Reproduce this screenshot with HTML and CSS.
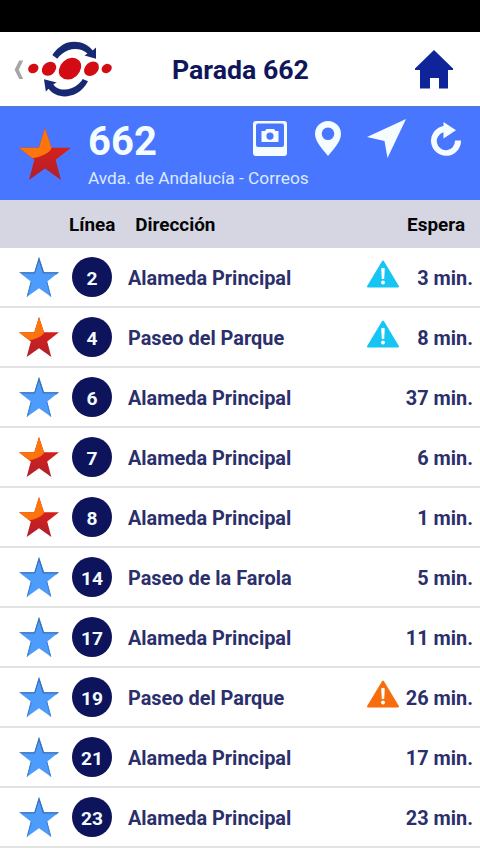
FILE: index.html
```html
<!DOCTYPE html>
<html lang="es">
<head>
<meta charset="utf-8">
<title>Parada 662</title>
<link rel="stylesheet" href="styles.css">
</head>
<body>
<svg class="defs" width="0" height="0" aria-hidden="true">
  <defs>
    <linearGradient id="gRed" x1="0" y1="0" x2="0" y2="1"><stop offset=".4" stop-color="#d5201c"/><stop offset="1" stop-color="#ae202c"/></linearGradient>
    <clipPath id="starClip"><path d="M20 0 25 15.200H40L28.200 24.500 32.300 40 20 31.200 7.700 40 11.800 24.500 0 15.200H15.300z"/></clipPath>
  </defs>
  <symbol id="star-blue" viewBox="0 0 40 40">
    <path fill="#4d9bfa" d="M20 0 25 15.200H40L28.200 24.500 32.300 40 20 31.200 7.700 40 11.800 24.500 0 15.200H15.300z"/>
    <path fill="#3c71b5" d="M20 0 25 15.200H40L36.500 17.900 37 16.600H24L20 4 16 16.600H3.500L0 15.200H15.300z"/>
    <path fill="#3f80d0" d="M7.700 40 11.800 24.500 12.800 25 9 39zM32.300 40 28.200 24.500 27.300 25 31 39z"/>
  </symbol>
  <symbol id="star-red" viewBox="0 0 40 40">
    <g clip-path="url(#starClip)"><path fill="url(#gRed)" d="M0 0H40V40H0z"/><path fill="#fb740c" d="M0 0H26V13Q25 17 22 19 16 23 6 24H0z"/></g>
  </symbol>
  <symbol id="warn" viewBox="0 0 32 28">
    <path fill="currentColor" stroke="currentColor" stroke-width="2" stroke-linejoin="round" d="M16 1.500 31 26.500H1z"/>
    <path fill="#fff" d="M14.200 8.500Q16 7 17.800 8.500L17.200 19H14.800z"/><circle cx="16" cy="22.500" r="1.900" fill="#fff"/>
  </symbol>
</svg>
<div class="status"></div>
<header class="topbar">
  <svg class="back" viewBox="0 0 10 20"><path d="M5.200 .5H9.200L4.800 9.800 9.200 19H5.200L.6 9.800z"/></svg>
  <svg class="logo" viewBox="0 0 86 56">
    <g fill="#182974">
      <path d="M24.300 14C28 8.500 34 3.500 39 1.800 49-1 59 2 64.700 9.500L68 6.500V17.800L56.500 14.600 59.500 12.500C54 8 47 7 40.300 9.200 36 11 32 14 29.300 17.700z"/>
      <path d="M60 40.200C57 46 53 50 48.700 52.300 38 58 26 55.500 20.700 47.800L17.800 50.500 16 38.300 28.700 41.500 25.300 43.300C28 47.500 32 48.800 37 48.500 45 48 51 44 54.700 38z"/>
    </g>
    <g fill="#d20c12">
      <ellipse cx="5.300" cy="27.500" rx="5.300" ry="4.500" transform="rotate(-30 5.300 27.500)"/>
      <ellipse cx="21" cy="27.700" rx="7.800" ry="6.300" transform="rotate(-42 21 27.700)"/>
      <ellipse cx="42" cy="27.700" rx="12.200" ry="9.700" transform="rotate(-42 42 27.700)"/>
      <ellipse cx="63.500" cy="27.700" rx="8.300" ry="6.400" transform="rotate(-42 63.500 27.700)"/>
      <ellipse cx="78.700" cy="27.500" rx="5.300" ry="4.400" transform="rotate(-30 78.700 27.500)"/>
    </g>
  </svg>
  <h1>Parada 662</h1>
  <svg class="home" viewBox="0 0 38 39"><path d="M19 0 38 18.500V20H33V38.500H24V28H15V38.500H5V20H0V18.500z"/></svg>
</header>
<section class="stop">
  <svg class="stop-star" preserveAspectRatio="none" viewBox="0 0 40 40"><use href="#star-red"/></svg>
  <div class="stop-info">
    <div class="stop-line">
      <h2>662</h2>
      <div class="tools">
        <svg width="34" height="36" viewBox="0 0 34 36"><path fill-rule="evenodd" d="M3 0H31Q34 0 34 3V32Q34 35 31 35H3Q0 35 0 32V3Q0 0 3 0zM5 2.500Q3 2.500 3 4.500V24Q3 26 5 26H29Q31 26 31 24V4.500Q31 2.500 29 2.500z"/><path fill-rule="evenodd" d="M9 10H12L13.500 8H21L22.500 10H25.500V21H8.500V10zM17 11.500A3.600 3.600 0 1 0 17 18.700 3.600 3.600 0 1 0 17 11.500z"/></svg>
        <svg width="26" height="36" viewBox="0 0 26 36"><path fill-rule="evenodd" d="M13 0A13 13 0 0 1 26 13C26 20 19 28 13 35 7 28 0 20 0 13A13 13 0 0 1 13 0zM13 6.500A6.300 6.300 0 1 0 13 19.100 6.300 6.300 0 1 0 13 6.500z"/></svg>
        <svg class="arrow" width="40" height="40" viewBox="0 0 40 40"><path d="M39 0 20.500 39 17.500 22 0 18z"/></svg>
        <svg width="30" height="36" viewBox="0 0 30 36"><path d="M24 19.500H30A15 15 0 1 1 12.500 5V1L25 9.300 12.500 17.500V11.300A9.100 9.100 0 1 0 24 20z"/></svg>
      </div>
    </div>
    <p>Avda. de Andalucía - Correos</p>
  </div>
</section>
<main class="table">
  <div class="thead"><span class="h-line">Línea</span><span class="h-dir">Dirección</span><span>Espera</span></div>
  <div class="row"><svg class="star"><use href="#star-blue"/></svg><b>2</b><span class="name">Alameda Principal</span><svg class="warn"><use href="#warn"/></svg><span class="time">3 min.</span></div>
  <div class="row"><svg class="star"><use href="#star-red"/></svg><b>4</b><span class="name">Paseo del Parque</span><svg class="warn"><use href="#warn"/></svg><span class="time">8 min.</span></div>
  <div class="row"><svg class="star"><use href="#star-blue"/></svg><b>6</b><span class="name">Alameda Principal</span><span class="time">37 min.</span></div>
  <div class="row"><svg class="star"><use href="#star-red"/></svg><b>7</b><span class="name">Alameda Principal</span><span class="time">6 min.</span></div>
  <div class="row"><svg class="star"><use href="#star-red"/></svg><b>8</b><span class="name">Alameda Principal</span><span class="time">1 min.</span></div>
  <div class="row"><svg class="star"><use href="#star-blue"/></svg><b>14</b><span class="name">Paseo de la Farola</span><span class="time">5 min.</span></div>
  <div class="row"><svg class="star"><use href="#star-blue"/></svg><b>17</b><span class="name">Alameda Principal</span><span class="time">11 min.</span></div>
  <div class="row"><svg class="star"><use href="#star-blue"/></svg><b>19</b><span class="name">Paseo del Parque</span><svg class="warn orange"><use href="#warn"/></svg><span class="time">26 min.</span></div>
  <div class="row"><svg class="star"><use href="#star-blue"/></svg><b>21</b><span class="name">Alameda Principal</span><span class="time">17 min.</span></div>
  <div class="row"><svg class="star"><use href="#star-blue"/></svg><b>23</b><span class="name">Alameda Principal</span><span class="time">23 min.</span></div>
</main>
</body>
</html>
```
FILE: styles.css
```css
* { box-sizing: border-box; }
body { margin: 0; width: 480px; height: 853px; overflow: hidden; background: #fff; font-family: Roboto, sans-serif; }
h1, h2, p { margin: 0; }
svg { display: block; flex: none; }
.defs { position: absolute; }
.status { height: 32px; background: #000; }
.topbar { display: flex; align-items: center; height: 75px; padding: 1px 27px 0 14px; border-bottom: 1px solid #5878c8; }
.back { width: 10px; height: 20px; fill: #a6a6a6; }
.logo { width: 86px; height: 56px; margin: -1px 0 0 4px; }
.topbar h1 { flex: 1; margin-left: 58px; padding-top: 1px; font-size: 26.700px; line-height: 32px; font-weight: 700; color: #10165a; }
.home { width: 38px; height: 39px; fill: #10249a; }
.stop { display: flex; height: 93px; padding: 14px 19px 0 19px; background: #4876ff; color: #fff; }
.stop-star { width: 52px; height: 52px; margin-top: 7px; }
.stop-info { flex: 1; margin-left: 17px; }
.stop-line { display: flex; justify-content: space-between; height: 46px; }
.stop h2 { font-size: 40px; line-height: 42px; font-weight: 700; color: #f5fcff; }
.stop p { font-size: 17.300px; line-height: 22px; color: #dceaff; }
.tools { display: flex; fill: #f5fcff; }
.tools svg + svg { margin-left: 28px; }
.tools svg.arrow { margin: -2px -4px 0 26px; }
.thead { display: flex; align-items: center; height: 48px; padding: 0 15px 0 69px; background: #d5d6e2; color: #050508; font-size: 18.900px; font-weight: 700; }
.h-dir { flex: 1; margin-left: 20px; }
.row { display: flex; align-items: center; height: 60px; padding: 0 7px 0 18.600px; border-bottom: 2px solid #e1e2e4; font-size: 19.900px; font-weight: 700; color: #2b2f6b; }
.star { width: 40px; height: 40px; }
.row b { display: flex; align-items: center; justify-content: center; flex: none; width: 40px; height: 40px; margin-left: 13.400px; padding-top: 2px; border-radius: 50%; background: #0d145c; color: #f2f9ff; font-size: 19.200px; font-weight: 700; }
.name { flex: 1; margin-left: 16px; padding-top: 2px; }
.warn { width: 32px; height: 28px; margin: -6px 0 0; color: #17c5f4; }
.warn.orange { color: #f76c0d; }
.time { width: 74px; padding-top: 2px; text-align: right; }
```
